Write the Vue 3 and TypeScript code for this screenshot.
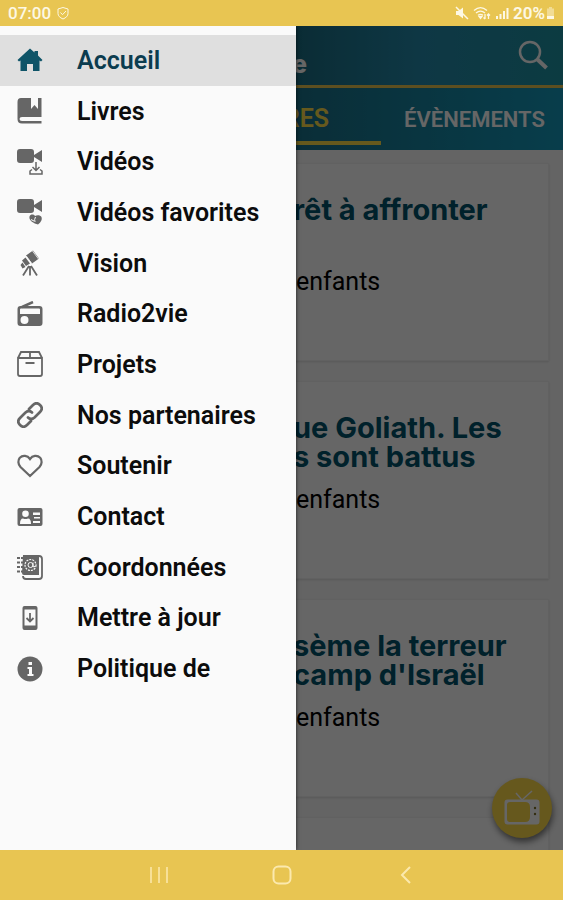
<script setup lang="ts">
interface MenuItem {
  label: string
  icon: string
}

interface Card {
  title: string
  audience: string
}

const menu: MenuItem[] = [
  { label: 'Accueil', icon: 'home' },
  { label: 'Livres', icon: 'book' },
  { label: 'Vidéos', icon: 'video-download' },
  { label: 'Vidéos favorites', icon: 'video-heart' },
  { label: 'Vision', icon: 'telescope' },
  { label: 'Radio2vie', icon: 'radio' },
  { label: 'Projets', icon: 'box' },
  { label: 'Nos partenaires', icon: 'link' },
  { label: 'Soutenir', icon: 'heart' },
  { label: 'Contact', icon: 'id-card' },
  { label: 'Coordonnées', icon: 'address-book' },
  { label: 'Mettre à jour', icon: 'update' },
  { label: 'Politique de', icon: 'info' },
]

const cards: Card[] = [
  { title: 'rêt à affronter', audience: 'enfants' },
  { title: 'ue Goliath. Les\ns sont battus', audience: 'enfants' },
  { title: "sème la terreur\ncamp d'Israël", audience: 'enfants' },
]
</script>

<template>
  <div class="device">
    <div class="status">
      <span class="clock">07:00</span>
      <svg class="status-check" viewBox="0 0 14 14" fill="none" stroke="currentColor">
        <path d="M7 1.5 12 3v4.5c0 2.500-2 4.200-5 5.500-3-1.300-5-3-5-5.500V3z" />
        <path d="m4.500 6.500 2 2.200L10 5" />
      </svg>
      <div class="status-right">
        <svg class="status-icon" viewBox="0 0 14 14" fill="currentColor">
          <path d="M1 5h2.500L8 1.500v11L3.500 9H1z" />
          <path d="M1 1l12 12" stroke="currentColor" stroke-width="1.500" fill="none" />
        </svg>
        <svg class="status-wifi" viewBox="0 0 18 14" fill="none" stroke="currentColor" stroke-width="1.300">
          <path d="M1 4.500c4-3.500 9-3.500 13 0M3 7c3-2.500 6-2.500 9 0M5 9.300c1.600-1.200 3.400-1.200 5 0" />
          <path d="M6 10.500h3L7.500 12.500z" fill="currentColor" />
          <path d="M12 8v5M10.500 11.500 12 13M15.500 13V8M14 9.500 15.500 8 17 9.500" />
        </svg>
        <svg class="status-icon" viewBox="0 0 14 14" fill="currentColor">
          <path d="M1 10h2v3H1zM4.500 8h2v5h-2zM8 5h2v8H8zM11.500 2h2v11h-2z" />
        </svg>
        <span class="charge">20%</span>
        <svg class="battery" viewBox="0 0 9 14" fill="currentColor">
          <path d="M3 1h3v1.500h2V10H1V2.500h2z" opacity=".45" />
          <path d="M1 10h7v3H1z" />
        </svg>
      </div>
    </div>

    <div class="screen">
      <main class="page">
        <header class="header">
          <h1 class="title">e</h1>
          <button class="search" type="button" aria-label="Rechercher">
            <svg viewBox="0 0 32 32" fill="none" stroke="currentColor">
              <circle cx="13" cy="12" r="10" stroke-width="2.500" />
              <path d="m20.500 19.500 9 8.500" stroke-width="4" />
            </svg>
          </button>
        </header>
        <nav class="tabs">
          <a class="tab selected" href="#livres">RES</a>
          <a class="tab events" href="#evenements">ÉVÈNEMENTS</a>
        </nav>
        <section class="cards">
          <article v-for="(card, i) in cards" :key="i" class="card">
            <h2 class="card-title">{{ card.title }}</h2>
            <p class="audience">{{ card.audience }}</p>
          </article>
          <article class="card"></article>
        </section>
        <button class="fab" type="button" aria-label="Télévision">
          <svg viewBox="0 0 36 36" fill="none" stroke="currentColor">
            <path d="m12 3 6 7 10-9" stroke-width="1.500" />
            <path
              d="M3.500 9.500h29a3 3 0 0 1 3 3v19a3 3 0 0 1-3 3h-29a3 3 0 0 1-3-3v-19a3 3 0 0 1 3-3zM6 12q-3 0-3 3v14q0 3 3 3h15q5 0 5-5V17q0-5-5-5z"
              fill="currentColor"
              fill-rule="evenodd"
              stroke="none"
            />
            <g class="fab-knobs">
              <circle cx="31" cy="18" r="1.200" />
              <circle cx="31" cy="24" r="1.200" />
            </g>
          </svg>
        </button>
      </main>

      <div class="scrim"></div>

      <aside class="drawer">
        <ul class="menu">
          <li v-for="(item, i) in menu" :key="item.icon" class="menu-row">
            <a class="menu-link" :class="{ active: i === 0 }" :href="'#' + item.icon">
              <svg class="icon" viewBox="0 0 26 26" fill="currentColor">
                <path
                  v-if="item.icon === 'home'"
                  d="M13 1.500 17.500 5.500V4h3.500v4.600l4.500 4.400-1.500 1.500-1.500-1V24h-6.500v-7h-6v7H3.500V13.500l-1.500 1L.5 13z"
                />
                <g v-else-if="item.icon === 'book'">
                  <path d="M4 0h10v11l3.500-4 3.500 4V0h3.500v19H5q-2.500 0-2.500 2t2.500 2h19.500v2.500H5q-4.500 0-4.500-4.500V4Q.5 0 4 0z" />
                </g>
                <g v-else-if="item.icon === 'video-download'">
                  <path d="M3 0h11q3 0 3 3v8q0 3-3 3H3q-3 0-3-3V3q0-3 3-3zM17 6l8-5v12l-8-5z" />
                  <g fill="none" stroke="currentColor" stroke-width="1.500">
                    <path class="halo" d="M19 12v9" />
                    <path d="M19 13v8M15.500 18l3.500 3.500 3.500-3.500M15 20.500l-2 1.500v3h12v-3l-2-1.500" />
                  </g>
                </g>
                <g v-else-if="item.icon === 'video-heart'">
                  <path d="M3 0h11q3 0 3 3v8q0 3-3 3H3q-3 0-3-3V3q0-3 3-3zM17 6l8-5v12l-8-5z" />
                  <path d="M12.500 17.500c1-2.500 4-2.500 5.500-.5 2-1.500 5.500-1 6.500 1 1 2.500-.5 5-3.500 7.500-4-1-9.500-4-8.500-8z" />
                  <path d="M18.500 18q-1.500 2.500-.5 5M14 20.500l3 1.500" fill="none" stroke="#fafafa" stroke-width="1" />
                </g>
                <g v-else-if="item.icon === 'telescope'">
                  <path d="m16 .5 6 8-7 5-6-8zM8.500 7.500l4.500 6-4 2.500-4-5.500zM5.500 12.500l3 4.500-3 1.500-2-3.500z" />
                  <path d="m15.500 1 6 8M9.300 6l5 7" fill="none" stroke="#fafafa" stroke-width="0.800" />
                  <path d="m12 16-6 9.500M13 16v9.500M14 16l6 9.500" fill="none" stroke="currentColor" stroke-width="1.800" />
                </g>
                <g v-else-if="item.icon === 'radio'">
                  <path d="m5 6 11-5" stroke="currentColor" stroke-width="2.500" />
                  <path
                    fill-rule="evenodd"
                    d="M3.500 5h19Q25.500 5 25.500 8v14q0 3-3 3h-19Q.5 25 .5 22V8q0-3 3-3zM4 7.500q-1 0-1 1V13h20V8.500q0-1-1-1zM7.500 15a4 4 0 1 0 0 8 4 4 0 0 0 0-8z"
                  />
                </g>
                <g v-else-if="item.icon === 'box'" fill="none" stroke="currentColor" stroke-width="1.800">
                  <path d="M1 7v16q0 2 2 2h20q2 0 2-2V7zM1 7l3-6h18l3 6M13 1v6M8.500 12h9" />
                </g>
                <g v-else-if="item.icon === 'link'" fill="none" stroke="currentColor" stroke-width="2.700" stroke-linecap="round">
                  <path d="m12 7 4-4q3.500-3.500 7 0t0 7l-5.500 5.500q-3.500 3-6.500 0" />
                  <path d="m14 19-4 4q-3.500 3.500-7 0t0-7l5.500-5.500q3.500-3 6.500 0" />
                </g>
                <path
                  v-else-if="item.icon === 'heart'"
                  d="M13 23 3.500 14C.8 11 .8 7 2.800 4.700 5.800 1.800 10.500 2.500 13 6c2.500-3.500 7.200-4.200 10.200-1.300 2 2.300 2 6.300-.7 9.300z"
                  fill="none"
                  stroke="currentColor"
                  stroke-width="2.200"
                />
                <g v-else-if="item.icon === 'id-card'">
                  <path d="M2.500 4h21q2 0 2 2v14q0 2-2 2h-21q-2 0-2-2V6q0-2 2-2z" />
                  <path
                    fill="#fafafa"
                    d="M8.500 6.500a3.300 3.300 0 1 1 0 6.600 3.300 3.300 0 0 1 0-6.600zM3 20q0-5.500 3-5.500 2.500 1 5 0 3 0 3 5.500zM16 8.500h7V11h-7zM17 13h6v1.500h-6zM16 17h7v2h-7z"
                  />
                </g>
                <g v-else-if="item.icon === 'address-book'">
                  <path d="M6 1h14q2 0 2 2v18H7q-2 0-2-2z" />
                  <path d="M20 2h2q3 0 3 3v17q0 3-3 3H9q-3 0-3-3" fill="none" stroke="currentColor" stroke-width="1.800" />
                  <path d="M0 4h6M0 8.500h6M0 13h6M0 17.500h6" stroke="currentColor" stroke-width="2" stroke-dasharray="3 1" />
                  <circle cx="13.500" cy="11" r="5.500" fill="none" stroke="#fafafa" stroke-width="1.200" stroke-dasharray="2 1" />
                  <path d="M16 8.500v4q1 1 2-.500M16 11a2.500 2.500 0 1 1-5 0 2.500 2.500 0 0 1 5 0z" fill="none" stroke="#fafafa" />
                </g>
                <g v-else-if="item.icon === 'update'">
                  <path fill-rule="evenodd" d="M7.500 1h11q2 0 2 2v20q0 2-2 2h-11q-2 0-2-2V3q0-2 2-2zM7.500 4.500v16h11v-16z" />
                  <path d="M13 8v8M9.500 13l3.500 3.500 3.500-3.500" fill="none" stroke="currentColor" stroke-width="1.800" />
                </g>
                <g v-else>
                  <circle cx="13" cy="13" r="12.500" />
                  <path fill="#fafafa" d="M11.500 6h3.500v3h-3.500zM10.500 11H15v7h1.500v2h-6v-2H12v-5h-1.500z" />
                </g>
              </svg>
              <span>{{ item.label }}</span>
            </a>
          </li>
        </ul>
      </aside>
    </div>

    <nav class="system-nav">
      <button class="nav-button" type="button" aria-label="Applications récentes">
        <svg viewBox="0 0 20 20" fill="none" stroke="currentColor" stroke-width="1.500">
          <path d="M2 2v16M10 2v16M18 2v16" />
        </svg>
      </button>
      <button class="nav-button" type="button" aria-label="Écran d’accueil">
        <svg viewBox="0 0 20 20" fill="none" stroke="currentColor" stroke-width="2">
          <rect x="1.500" y="1.500" width="17" height="17" rx="5" />
        </svg>
      </button>
      <button class="nav-button" type="button" aria-label="Retour">
        <svg viewBox="0 0 20 20" fill="none" stroke="currentColor" stroke-width="2">
          <path d="m15 2-8 8 8 8" />
        </svg>
      </button>
    </nav>
  </div>
</template>

<style>
body {
  margin: 0;
}
</style>

<style scoped>
.device {
  --drawer: 296px;
  --yellow: #e8c552;
  display: flex;
  flex-direction: column;
  height: 100vh;
  font-family: Roboto, "Liberation Sans", sans-serif;
}

button {
  border: 0;
  padding: 0;
  background: none;
  color: inherit;
}

svg {
  display: block;
}

.status {
  display: flex;
  flex: none;
  align-items: center;
  height: 26px;
  padding: 0 8px;
  background: var(--yellow);
  color: #fdf8e4;
  font-size: 17px;
  font-weight: 500;
}

.status-check {
  width: 14px;
  height: 14px;
  margin-left: 5px;
}

.status-right {
  display: flex;
  align-items: center;
  gap: 4px;
  margin-left: auto;
}

.status-icon {
  width: 14px;
  height: 14px;
}

.status-wifi {
  width: 18px;
  height: 14px;
}

.charge {
  font-weight: 600;
}

.battery {
  width: 9px;
  height: 14px;
  margin-left: -3px;
}

.screen {
  position: relative;
  flex: 1;
  min-height: 0;
  overflow: hidden;
}

.page {
  display: flex;
  flex-direction: column;
  height: 100%;
  overflow: hidden;
  background: #fafafa;
}

.header {
  display: flex;
  flex: none;
  align-items: center;
  justify-content: space-between;
  height: 59px;
  padding: 0 14px 0 292px;
  border-bottom: 3px solid var(--yellow);
  background: linear-gradient(90deg, #1a6b80 50%, #248bac 75%, #1f94a4);
  color: #fff;
}

.title {
  margin: 16px 0 0;
  font-family: Inter, sans-serif;
  font-size: 25px;
  font-weight: 800;
}

.search svg {
  width: 32px;
  height: 32px;
}

.tabs {
  display: flex;
  flex: none;
  height: 62px;
  padding-left: 197px;
  background: linear-gradient(90deg, #1a7088 50%, #149abc);
}

.tab {
  display: flex;
  align-items: center;
  justify-content: center;
  color: #fff;
  font-size: 22px;
  font-weight: 600;
  text-decoration: none;
}

.selected {
  box-sizing: border-box;
  width: 184px;
  margin-bottom: 5px;
  padding: 8px 52px 0 0;
  border-bottom: 4px solid #ffdf4a;
  justify-content: flex-end;
  color: #ffdf4a;
  font-size: 25px;
}

.events {
  flex: 1;
  padding: 0 18px 0 23px;
}

.cards {
  display: flex;
  flex-direction: column;
  gap: 20px;
  padding: 13px 14px 0;
}

.card {
  flex: none;
  box-sizing: border-box;
  min-height: 198px;
  padding: 31px 8px 24px 278px;
  border: 1px solid #f2f2f2;
  background: #fff;
  box-shadow: 0 1px 2px rgba(0, 0, 0, 0.12);
}

.card-title {
  min-height: 58px;
  margin: 0;
  color: #00536b;
  font-family: Inter, sans-serif;
  font-size: 29px;
  font-weight: 700;
  line-height: 29px;
  white-space: pre;
}

.audience {
  margin: 13px 0 0;
  padding-left: 3px;
  font-size: 25px;
  line-height: 32px;
}

.fab {
  position: absolute;
  right: 11px;
  bottom: 12px;
  display: grid;
  place-items: center;
  width: 60px;
  height: 60px;
  border-radius: 50%;
  background: #ffdb4a;
  box-shadow: 1px 4px 6px rgba(0, 0, 0, 0.5);
  color: #fff;
}

.fab svg {
  width: 36px;
  height: 36px;
}

.fab-knobs {
  fill: #80702a;
  stroke: none;
}

.scrim {
  position: absolute;
  inset: 0;
  background: rgba(0, 0, 0, 0.6);
}

.drawer {
  position: absolute;
  inset: 0 auto 0 0;
  box-sizing: border-box;
  width: var(--drawer);
  max-width: 85%;
  padding-top: 9px;
  overflow-y: auto;
  background: #fafafa;
  box-shadow: 0 0 4px rgba(0, 0, 0, 0.7);
}

.menu {
  display: grid;
  grid-auto-rows: 1fr;
  min-height: 659px;
  margin: 0;
  padding: 0;
  list-style: none;
}

.menu-row {
  display: grid;
}

.menu-link {
  display: flex;
  align-items: center;
  gap: 34px;
  padding-left: 17px;
  color: #0c0c0c;
  font-size: 25px;
  font-weight: 600;
  text-decoration: none;
  white-space: nowrap;
}

.icon {
  flex: none;
  width: 26px;
  height: 26px;
  color: #666;
}

.halo {
  stroke: #fafafa;
  stroke-width: 4;
}

.active {
  background: #dfdfdf;
  color: #0b3c4f;
}

.active .icon {
  color: #0e5468;
}

.system-nav {
  display: flex;
  flex: none;
  align-items: center;
  justify-content: center;
  gap: 103px;
  height: 50px;
  background: var(--yellow);
  color: #fbe9ae;
}

.nav-button svg {
  width: 20px;
  height: 20px;
}
</style>
